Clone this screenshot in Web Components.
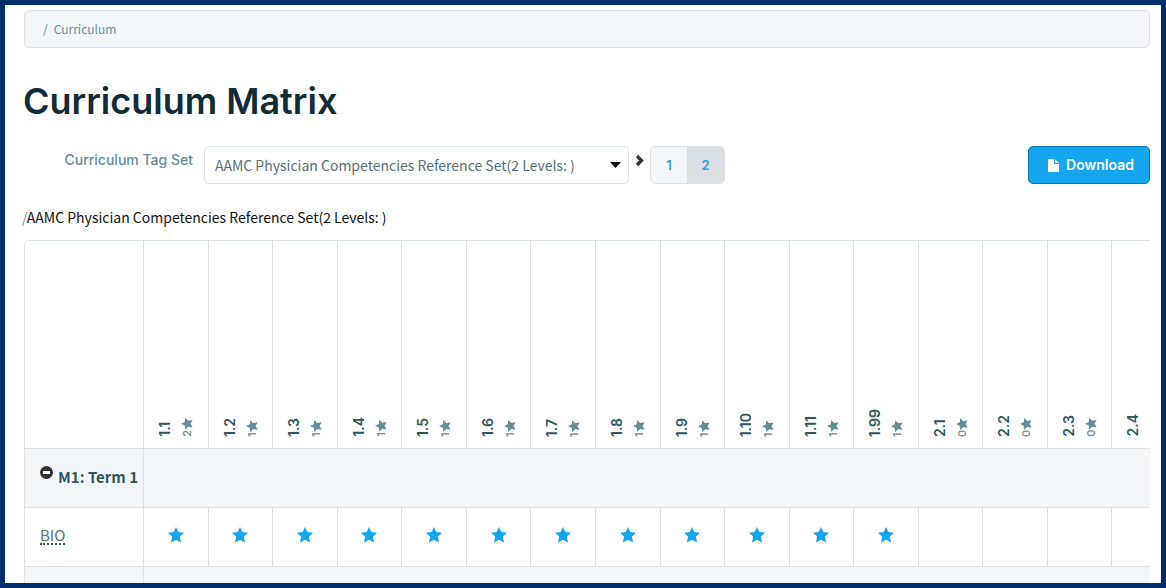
<!DOCTYPE html>
<html lang="en">
<head>
<meta charset="utf-8">
<title>Curriculum Matrix</title>
<style>
  body { margin: 0; }
</style>
</head>
<body>
<app-frame>
  <bread-crumb>Curriculum</bread-crumb>
  <page-title>Curriculum Matrix</page-title>
  <matrix-toolbar></matrix-toolbar>
  <tag-path>AAMC Physician Competencies Reference Set(2 Levels: )</tag-path>
  <curriculum-matrix></curriculum-matrix>
</app-frame>

<script>
const define = (name, html, setup) => {
  const template = document.createElement('template');
  template.innerHTML = html;
  customElements.define(name, class extends HTMLElement {
    constructor() {
      super();
      this.attachShadow({ mode: 'open' }).append(template.content.cloneNode(true));
      if (setup) setup(this.shadowRoot);
    }
  });
};

define('star-icon', `
  <style>
    :host { display: inline-block; width: 16px; height: 16px; }
    svg { display: block; width: 100%; height: 100%; }
  </style>
  <svg viewBox="0 0 16 16" aria-hidden="true"><path fill="currentColor" d="M8 0l2.400 5 5.600.700-4.100 3.900 1.100 5.900L8 12.700l-5 2.800 1.100-5.900L0 5.700 5.600 5z"/></svg>`);

define('app-frame', `
  <style>
    :host {
      display: block; box-sizing: border-box; height: 100vh; overflow: hidden;
      border: 5px solid #002f6c; padding: 5px 11px 0 19px; background: #fff;
      color: #2f5562; font-family: "Noto Sans CJK SC", "Noto Sans", sans-serif;
      --line: #dbe1e5; --tint: #f3f7fa; --muted: #678c99; --blue: #16a5ef;
      --display: Inter, "Open Sans", sans-serif;
    }
  </style>
  <slot></slot>`);

define('bread-crumb', `
  <style>
    :host { display: block; border: 1px solid var(--line); border-radius: 5px; background: var(--tint);
      padding: 8px 18px; font-size: 12px; line-height: 20px; color: var(--muted); }
    ol { display: flex; gap: 6px; margin: 0; padding: 0; list-style: none; }
  </style>
  <nav aria-label="Breadcrumb"><ol><li>/</li><li><slot></slot></li></ol></nav>`);

define('page-title', `
  <style>
    :host { display: block; padding: 29px 0 21px; }
    h1 { margin: 0 0 0 -1px; font: 600 36px/48px var(--display); color: #112b37; }
  </style>
  <h1><slot></slot></h1>`);

define('matrix-toolbar', `
  <style>
    :host { display: flex; align-items: flex-start; font-family: var(--display); }
    label { width: 169px; margin-right: 11px; text-align: right; font-size: 14px; line-height: 28px; font-weight: 500; color: var(--muted); }
    .pick { display: grid; width: 425px; }
    .pick > * { grid-area: 1 / 1; }
    select { appearance: none; box-sizing: border-box; width: 100%; height: 38px; border: 1px solid var(--line);
      border-radius: 5px; background: #fff; padding: 0 30px 0 10px; color: #56707b;
      font: 14px/24px "Noto Sans CJK SC", "Noto Sans", sans-serif; }
    .caret { justify-self: end; align-self: center; margin-right: 8px; pointer-events: none; }
    .chev { margin: 8px 5px 0 6px; }
    .levels { display: flex; box-sizing: border-box; height: 38px; border: 1px solid var(--line); border-radius: 5px; overflow: hidden; }
    .levels button { width: 36px; border: 0; padding: 0; background: var(--tint); color: #2ba0ee; font: 600 13px/20px var(--display); }
    .levels button[aria-pressed=true] { background: #dadfe3; width: 37px; }
    .download { display: flex; align-items: center; justify-content: center; gap: 7px; box-sizing: border-box; width: 122px; height: 38px;
      margin-left: auto; border: 1px solid #0a76b5; border-radius: 5px; background: var(--blue); color: #fff; font: 600 14px/20px var(--display); padding: 0 0 0 4px; }
  </style>
  <label for="set">Curriculum Tag Set</label>
  <div class="pick">
    <select id="set"><option>AAMC Physician Competencies Reference Set(2 Levels: )</option></select>
    <svg class="caret" width="11" height="6" viewBox="0 0 11 6" aria-hidden="true"><path d="M0 0h11L5.500 6z"/></svg>
  </div>
  <svg class="chev" width="10" height="13" viewBox="0 0 10 13" aria-hidden="true"><path d="M2 2l4.500 4.500L2 11" fill="none" stroke="#333" stroke-width="3.200"/></svg>
  <div class="levels" role="group" aria-label="Level">
    <button type="button" aria-pressed="false">1</button><button type="button" aria-pressed="true">2</button>
  </div>
  <button type="button" class="download">
    <svg width="11" height="13" viewBox="0 0 11 13" aria-hidden="true"><path fill="#fff" d="M0 0h6v5h5v8H0zM7 0l4 4H7z"/></svg>Download
  </button>`);

define('tag-path', `
  <style>
    :host { display: block; margin-left: -2px; padding: 21px 0 11px; font-size: 14px; line-height: 24px; color: #111; }
    span { color: #888; }
  </style>
  <span>/</span><slot></slot>`);

define('curriculum-matrix', `
  <style>
    :host { display: block; overflow: hidden; border-top-left-radius: 5px; }
    table { width: 1152px; table-layout: fixed; border-collapse: separate; border-spacing: 0; }
    .first { width: 119px; }
    th, td { box-sizing: border-box; padding: 0; border: 0 solid var(--line); border-width: 1px 0 0 1px; text-align: center; vertical-align: middle; }
    thead td { border-top-left-radius: 5px; }
    thead tr { height: 208px; }
    tbody tr { height: 59px; }
    thead th { vertical-align: bottom; padding: 0 0 11px 12px; }
    .head { display: flex; flex-direction: column; align-items: flex-start; gap: 6px; width: 40px;
      writing-mode: vertical-rl; transform: rotate(180deg); font-family: var(--display); }
    .code { font-size: 14px; line-height: 18px; font-weight: 600; }
    .count { display: flex; align-items: center; font-size: 11px; line-height: 14px; font-weight: 500; color: var(--muted); }
    .count star-icon { width: 12px; height: 12px; transform: rotate(90deg); }
    .term th, .term td { background: var(--tint); }
    tbody th { text-align: left; }
    .term button { display: flex; align-items: flex-start; gap: 5px; border: 0; padding: 0 0 2px 15px; background: none; color: inherit;
      font: 700 15px/24px "Noto Sans CJK SC", "Noto Sans", sans-serif; white-space: nowrap; }
    .term svg { margin-top: 1px; }
    .course { padding: 0 0 4px 15px; font-size: 15px; line-height: 24px; font-weight: 400; }
    abbr { color: #56707b; text-decoration: none; border-bottom: 2px dotted #2f5562; display: inline-block; line-height: 16px; }
    td star-icon { display: block; margin: 0 auto 4px; color: var(--blue); }
  </style>
  <table>
    <thead><tr><td class="first"></td></tr></thead>
    <tbody>
      <tr class="term"><th scope="rowgroup"><button type="button" aria-expanded="true">
        <svg width="13" height="13" viewBox="0 0 13 13" aria-hidden="true"><circle cx="6.500" cy="6.500" r="6.500" fill="#333"/><path d="M3 5h7v3H3z" fill="#fff"/></svg>M1: Term 1</button></th><td colspan="16"></td></tr>
      <tr class="row"><th scope="row" class="course"><abbr>BIO</abbr></th></tr>
      <tr class="term"><th></th><td colspan="16"></td></tr>
    </tbody>
  </table>`, root => {
  const columns = [['1.1', 2], ['1.2', 1], ['1.3', 1], ['1.4', 1], ['1.5', 1], ['1.6', 1], ['1.7', 1], ['1.8', 1],
    ['1.9', 1], ['1.10', 1], ['1.11', 1], ['1.99', 1], ['2.1', 0], ['2.2', 0], ['2.3', 0], ['2.4', null]];
  const head = root.querySelector('thead tr');
  const row = root.querySelector('.row');
  for (const [code, count] of columns) {
    const tally = count === null ? '' : `<span class="count">${count}<star-icon></star-icon></span>`;
    head.insertAdjacentHTML('beforeend', `<th scope="col"><div class="head"><span class="code">${code}</span>${tally}</div></th>`);
    row.insertAdjacentHTML('beforeend', `<td>${count ? '<star-icon></star-icon>' : ''}</td>`);
  }
});
</script>
</body>
</html>
